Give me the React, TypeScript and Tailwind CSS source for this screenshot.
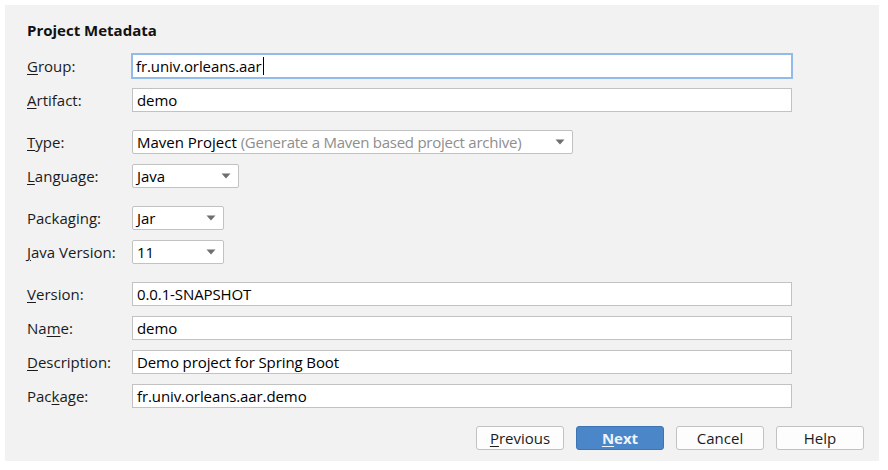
import React from "react";

const font = { fontFamily: '"Open Sans", "Noto Sans", sans-serif' };

function U({ children }: { children: React.ReactNode }) {
  return <span className="underline decoration-1 underline-offset-2">{children}</span>;
}

function Label({ children }: { children: React.ReactNode }) {
  return <div className="w-[105px] shrink-0 text-[15px] text-[#1b1b1b] leading-none">{children}</div>;
}

function TextBox({ value, focused }: { value: string; focused?: boolean }) {
  if (focused) {
    return (
      <div className="-mx-px flex h-[26px] w-[662px] items-center border-2 border-[#93bbe9] bg-white pl-[3px] text-[15px] tracking-[-0.1px] text-black">
        <span>{value}</span>
        <span className="ml-px h-[18px] w-px bg-black" />
      </div>
    );
  }
  return (
    <div className="flex h-[24px] w-[660px] items-center border border-[#c2c2c2] bg-white pl-[4px] text-[15px] tracking-[-0.1px] text-black">
      {value}
    </div>
  );
}

function Arrow() {
  return (
    <svg width="10" height="6" viewBox="0 0 10 6" className="shrink-0">
      <path d="M0.5 0.5 L9.5 0.5 L5 5.5 Z" fill="#6f6f6f" />
    </svg>
  );
}

function Select({ width, children }: { width: string; children: React.ReactNode }) {
  return (
    <div className={`flex h-[24px] ${width} items-center justify-between rounded-[2px] border border-[#c2c2c2] bg-white pl-[4px] pr-[7px] text-[15px] text-black`}>
      <span className="whitespace-nowrap">{children}</span>
      <Arrow />
    </div>
  );
}

function Row({ label, children, className = "" }: { label: React.ReactNode; children: React.ReactNode; className?: string }) {
  return (
    <div className={`flex items-center ${className}`}>
      <Label>{label}</Label>
      {children}
    </div>
  );
}

function Button({ children, primary }: { children: React.ReactNode; primary?: boolean }) {
  return (
    <div
      className={
        primary
          ? "flex h-[24px] w-[88px] items-center justify-center rounded-[3px] border border-[#3d74b3] bg-[#4a86c8] text-[15px] font-bold text-[#eef3fa]"
          : "flex h-[24px] w-[88px] items-center justify-center rounded-[3px] border border-[#c2c2c2] bg-[#fdfdfd] text-[15px] text-[#1b1b1b]"
      }
    >
      {children}
    </div>
  );
}

export default function App() {
  return (
    <div className="h-[470px] w-[888px] bg-white p-[5px]" style={font}>
      <div className="flex h-[456px] w-[874px] flex-col bg-[#f2f2f2] pl-[22px] pr-[15px] pt-[15px]">
        <div className="text-[15px] font-bold leading-[20px] text-[#111]">Project Metadata</div>
        <div className="mt-[13px] flex flex-col">
          <Row label={<><U>G</U>roup:</>}>
            <TextBox value="fr.univ.orleans.aar" focused />
          </Row>
          <Row label={<><U>A</U>rtifact:</>} className="mt-[9px]">
            <TextBox value="demo" />
          </Row>
          <Row label={<><U>T</U>ype:</>} className="mt-[18px]">
            <Select width="w-[441px]">
              Maven Project <span className="tracking-[-0.25px] text-[#8e8e8e]">(Generate a Maven based project archive)</span>
            </Select>
          </Row>
          <Row label={<><U>L</U>anguage:</>} className="mt-[10px]">
            <Select width="w-[107px]">Java</Select>
          </Row>
          <Row label={<>Packa<U>g</U>ing:</>} className="mt-[18px]">
            <Select width="w-[92px]">Jar</Select>
          </Row>
          <Row label={<><U>J</U>ava Version:</>} className="mt-[10px]">
            <Select width="w-[92px]">11</Select>
          </Row>
          <Row label={<><U>V</U>ersion:</>} className="mt-[18px]">
            <TextBox value="0.0.1-SNAPSHOT" />
          </Row>
          <Row label={<>Na<U>m</U>e:</>} className="mt-[10px]">
            <TextBox value="demo" />
          </Row>
          <Row label={<><U>D</U>escription:</>} className="mt-[10px]">
            <TextBox value="Demo project for Spring Boot" />
          </Row>
          <Row label={<>Pac<U>k</U>age:</>} className="mt-[10px]">
            <TextBox value="fr.univ.orleans.aar.demo" />
          </Row>
        </div>
        <div className="mt-[18px] flex justify-end gap-[12px]">
          <Button><U>P</U>revious</Button>
          <Button primary><U>N</U>ext</Button>
          <Button>Cancel</Button>
          <Button>Help</Button>
        </div>
      </div>
    </div>
  );
}
